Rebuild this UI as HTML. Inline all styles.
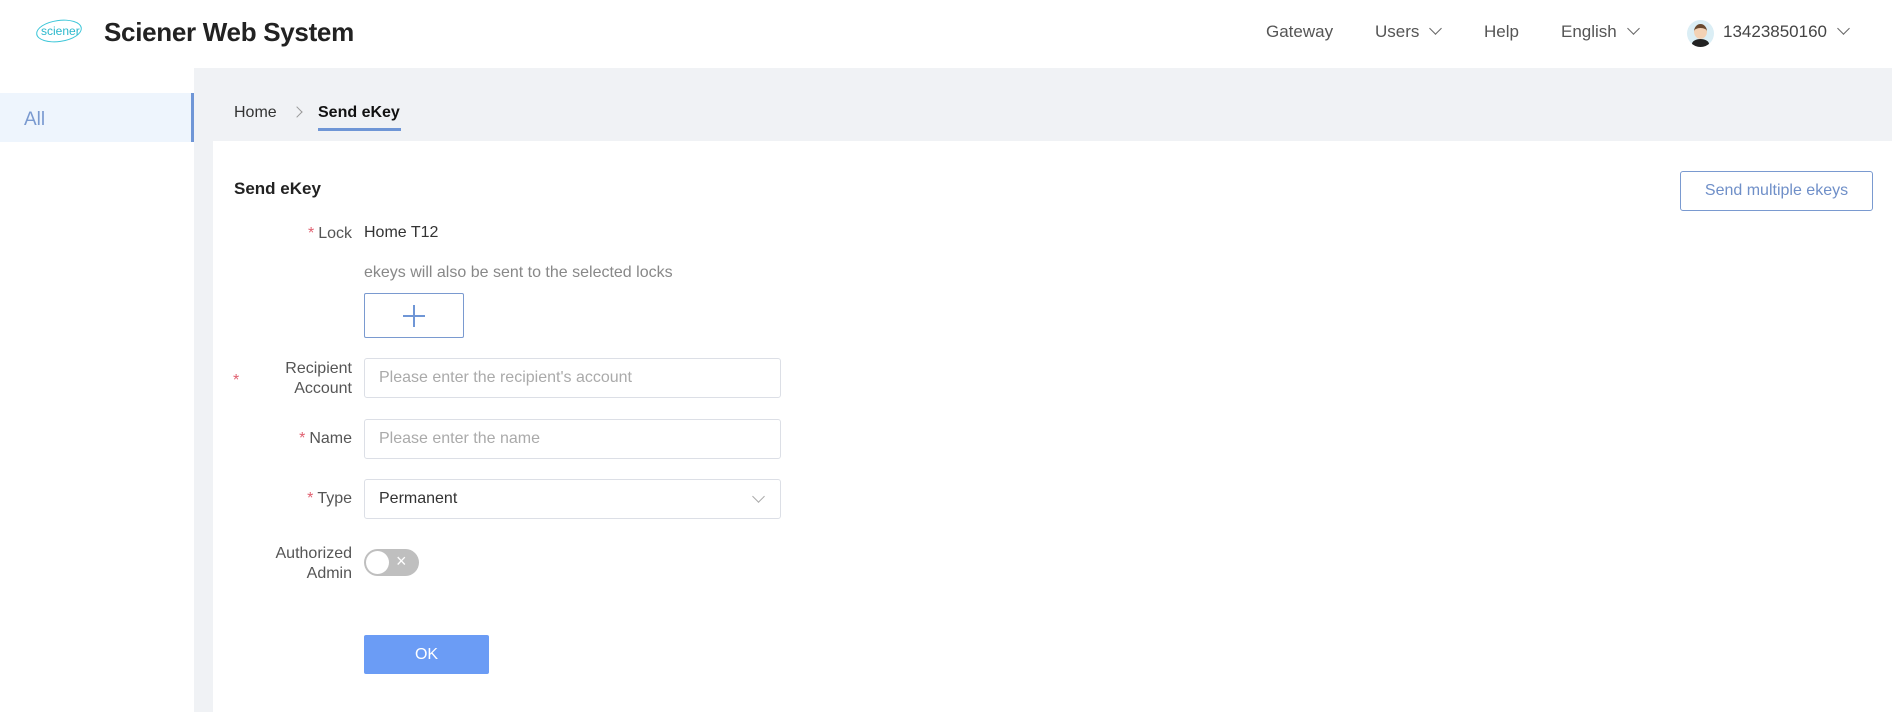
<!DOCTYPE html>
<html><head><meta charset="utf-8"><style>
*{box-sizing:border-box;margin:0;padding:0}
body{width:1892px;height:712px;overflow:hidden;background:#fff;font-family:"Liberation Sans",sans-serif;color:#333;position:relative}
.abs{position:absolute}
.nav{font-size:17px;color:#555;top:22px}
.chev{display:inline-block;width:9px;height:9px;border-right:1.6px solid #666;border-bottom:1.6px solid #666;transform:rotate(45deg);margin-left:12px;position:relative;top:-4px}
.lbl{font-size:16px;color:#555;text-align:right;right:1540px;line-height:20px}
.star{color:#e06070;margin-right:4px}
.inp{left:364px;width:417px;height:40px;border:1px solid #dcdfe6;border-radius:3px;font-size:16px;color:#aaa;padding:0 14px;line-height:38px}
</style></head><body>
<div class="abs" style="left:0;top:68px;width:1892px;height:644px;background:#f0f2f5"></div>
<div class="abs" style="left:0;top:68px;width:194px;height:644px;background:#fff"></div>
<div class="abs" style="left:0;top:93px;width:194px;height:49px;background:#eef5fd;border-right:3px solid #6f96d6"></div>
<div class="abs" style="left:24px;top:109px;font-size:19px;color:#7a9ad0">All</div>
<div class="abs" style="left:213px;top:141px;width:1679px;height:571px;background:#fff"></div>
<!-- header -->
<div class="abs" style="left:36px;top:20px;width:46px;height:22px;border:1.5px solid #3cc6d8;border-radius:50%;transform:rotate(-8deg)"></div>
<div class="abs" style="left:41px;top:24px;font-size:12px;color:#2bb8cc">sciener</div>
<div class="abs" style="left:104px;top:17px;font-size:26px;color:#222;font-weight:bold;letter-spacing:-0.3px">Sciener Web System</div>
<div class="abs nav" style="left:1266px">Gateway</div>
<div class="abs nav" style="left:1375px">Users<span class="chev"></span></div>
<div class="abs nav" style="left:1484px">Help</div>
<div class="abs nav" style="left:1561px">English<span class="chev"></span></div>
<div class="abs" style="left:1687px;top:20px;width:27px;height:27px;border-radius:50%;background:#dbeef5;overflow:hidden">
<div class="abs" style="left:7px;top:4px;width:13px;height:15px;border-radius:50%;background:#f3d2b5;border-top:4px solid #6a4a30"></div>
<div class="abs" style="left:5px;top:19px;width:17px;height:10px;border-radius:50% 50% 0 0;background:#222"></div></div>
<div class="abs nav" style="left:1723px;color:#444">13423850160<span class="chev"></span></div>
<!-- breadcrumb -->
<div class="abs" style="left:234px;top:104px;font-size:16px;color:#333">Home</div>
<div class="abs" style="left:293px;top:108px;width:8px;height:8px;border-right:1.3px solid #999;border-top:1.3px solid #999;transform:rotate(45deg)"></div>
<div class="abs" style="left:318px;top:104px;font-size:16px;color:#111;font-weight:bold">Send eKey</div>
<div class="abs" style="left:318px;top:128px;width:83px;height:3px;background:#6f96d6"></div>
<!-- card -->
<div class="abs" style="left:234px;top:179px;font-size:17px;font-weight:bold;color:#222">Send eKey</div>
<div class="abs" style="left:1680px;top:171px;width:193px;height:40px;border:1px solid #7a9ad0;border-radius:3px;color:#6f8fc8;font-size:16px;text-align:center;line-height:38px">Send multiple ekeys</div>
<div class="abs lbl" style="top:224px"><span class="star">*</span>Lock</div>
<div class="abs" style="left:364px;top:224px;font-size:16px;color:#333">Home T12</div>
<div class="abs" style="left:364px;top:264px;font-size:16px;color:#888">ekeys will also be sent to the selected locks</div>
<div class="abs" style="left:364px;top:293px;width:100px;height:45px;border:1px solid #7a9ad0;border-radius:2px"></div>
<div class="abs" style="left:403px;top:315px;width:22px;height:2px;background:#6f96d6"></div>
<div class="abs" style="left:413px;top:305px;width:2px;height:22px;background:#6f96d6"></div>
<div class="abs star" style="left:233px;top:372px;font-size:16px">*</div>
<div class="abs lbl" style="top:359px">Recipient<br>Account</div>
<div class="abs inp" style="top:358px">Please enter the recipient's account</div>
<div class="abs lbl" style="top:429px"><span class="star">*</span>Name</div>
<div class="abs inp" style="top:419px">Please enter the name</div>
<div class="abs lbl" style="top:489px"><span class="star">*</span>Type</div>
<div class="abs inp" style="top:479px;color:#333">Permanent</div>
<div class="abs" style="left:754px;top:492px;width:9px;height:9px;border-right:1.3px solid #aaa;border-bottom:1.3px solid #aaa;transform:rotate(45deg)"></div>
<div class="abs lbl" style="top:544px">Authorized<br>Admin</div>
<div class="abs" style="left:364px;top:549px;width:55px;height:27px;border-radius:14px;background:#bfbfbf"></div>
<div class="abs" style="left:366px;top:551px;width:23px;height:23px;border-radius:50%;background:#fff"></div>
<div class="abs" style="left:396px;top:551px;color:#fff;font-size:18px">×</div>
<div class="abs" style="left:364px;top:635px;width:125px;height:39px;background:#6b9cf5;border-radius:2px;color:#fff;font-size:16px;text-align:center;line-height:39px">OK</div>
</body></html>
